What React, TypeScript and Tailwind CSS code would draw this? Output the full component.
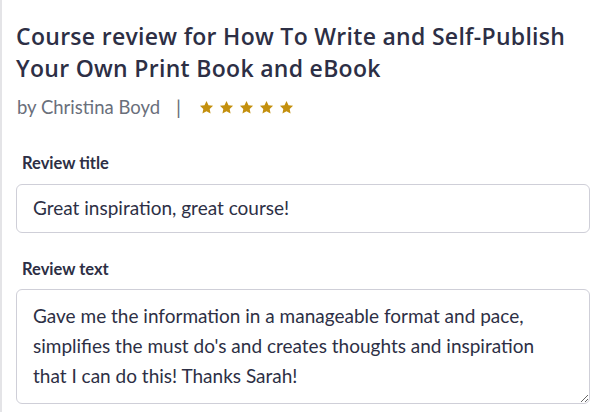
import React from 'react'

const Star = () => (
    <svg viewBox="0 0 24 24" className="w-[15px] h-[15px] fill-[#c4900e]">
        <path d="M12 1.5l3.2 6.7 7.3.9-5.4 5.1 1.4 7.3L12 18l-6.5 3.5 1.4-7.3-5.4-5.1 7.3-.9z" />
    </svg>
)

const App = () => {
    return (
        <div className="w-[597px] h-[412px] overflow-hidden bg-white border-l-2 border-[#e4e4e7] font-['Lato',sans-serif]">
            <div className="pl-[14px] pr-[7px] pt-[20px]">
                <h1 className="font-['Open_Sans',sans-serif] font-semibold text-[23px] leading-[32px] text-[#2d2f45] tracking-[0.3px]">
                    Course review for How To Write and Self-Publish Your Own Print Book and eBook
                </h1>
                <div className="flex items-center mt-[11px] pl-[1px] text-[18.5px] leading-[24px] text-[#6a6f7b]">
                    <span>by Christina Boyd</span>
                    <span className="ml-[16px] mr-[18px] text-[#6a6f7b] text-[20px]">|</span>
                    <div className="flex gap-[5px]">
                        <Star />
                        <Star />
                        <Star />
                        <Star />
                        <Star />
                    </div>
                </div>
                <label className="block mt-[33px] ml-[6px] text-[16.5px] leading-[22px] font-bold text-[#2d2f45]">Review title</label>
                <div className="mt-[10px] h-[49px] border border-[#cfcfd8] rounded-[6px] flex items-center px-[16px] text-[19px] text-[#2d2f45]">
                    Great inspiration, great course!
                </div>
                <label className="block mt-[25px] ml-[6px] text-[16.5px] leading-[22px] font-bold text-[#2d2f45]">Review text</label>
                <textarea
                    readOnly
                    className="mt-[9px] w-full h-[115px] border border-[#cfcfd8] rounded-[6px] pl-[16px] pr-[30px] pt-[11px] text-[19px] leading-[30px] text-[#2d2f45] outline-none block resize-y"
                    defaultValue="Gave me the information in a manageable format and pace, simplifies the must do's and creates thoughts and inspiration that I can do this! Thanks Sarah!"
                />
            </div>
        </div>
    )
}

export default App
